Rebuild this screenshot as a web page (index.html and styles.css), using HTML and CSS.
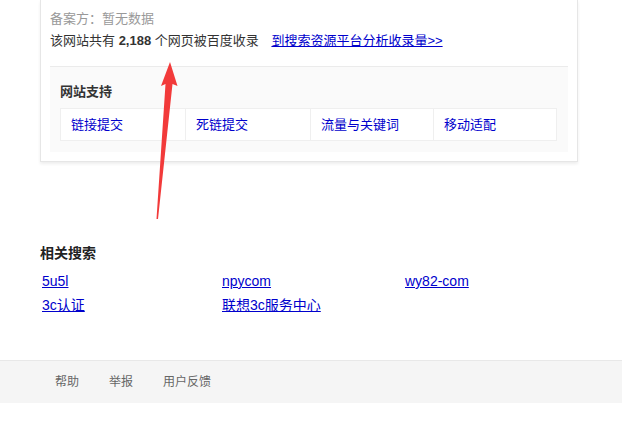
FILE: index.html
```html
<!DOCTYPE html>
<html lang="zh-CN">
  <head>
    <meta charset="UTF-8" />
    <meta name="viewport" content="width=device-width, initial-scale=1.0" />
    <title>网站收录</title>
    <link rel="stylesheet" href="styles.css">
  </head>
  <body>
    <div class="page">
      <!-- Site info card -->
      <div class="card">
        <p class="record">备案方：暂无数据</p>
        <p class="indexed">
          该网站共有 <b>2,188</b> 个网页被百度收录
          <a href="#" class="analyse">到搜索资源平台分析收录量&gt;&gt;</a>
        </p>

        <div class="support">
          <h3>网站支持</h3>
          <div class="support-grid">
            <a href="#">链接提交</a>
            <a href="#">死链提交</a>
            <a href="#">流量与关键词</a>
            <a href="#">移动适配</a>
          </div>
        </div>
      </div>

      <!-- Related searches -->
      <div class="related">
        <h3>相关搜索</h3>
        <div class="related-grid">
          <a href="#">5u5l</a>
          <a href="#">npycom</a>
          <a href="#">wy82-com</a>
          <a href="#">3c认证</a>
          <a href="#">联想3c服务中心</a>
        </div>
      </div>

      <!-- Footer -->
      <footer>
        <a href="#">帮助</a>
        <a href="#">举报</a>
        <a href="#">用户反馈</a>
      </footer>

      <!-- Annotation arrow -->
      <svg class="arrow" width="622" height="425" viewBox="0 0 622 425">
        <polygon points="170,62 177.5,86 172.5,84 158,219 156.5,219 165.5,84 161,86" fill="#f23a3a"/>
      </svg>
    </div>
  </body>
</html>
```

FILE: styles.css
```css
/* Base */
* {
  margin: 0;
  padding: 0;
  box-sizing: border-box;
}

body {
  font-family: "Liberation Sans", "Noto Sans CJK SC", sans-serif;
  font-size: 13px;
  color: #333;
  background: #fff;
}

a {
  color: #0000cc;
}

.page {
  position: relative;
  width: 622px;
  height: 425px;
  overflow: hidden;
}

/* Card */
.card {
  width: 538px;
  margin-left: 40px;
  padding: 8px 9px 9px 9px;
  border: 1px solid #e6e6e6;
  border-top: none;
  box-shadow: 0 2px 3px rgba(0, 0, 0, 0.07);
}

.record {
  line-height: 22px;
  color: #999;
}

.indexed {
  line-height: 21px;
  color: #333;
}

.indexed b {
  font-weight: bold;
}

.analyse {
  margin-left: 9px;
}

.support {
  margin-top: 15px;
  background: #fafafa;
  border-top: 1px solid #ebebeb;
  padding: 15px 11px 11px 10px;
}

.support h3 {
  font-size: 13px;
  line-height: 20px;
  font-weight: bold;
  color: #333;
  margin-bottom: 6px;
}

.support-grid {
  display: grid;
  grid-template-columns: 124px 125px 123px 124px;
  width: 497px;
  background: #fff;
  border: 1px solid #efefef;
}

.support-grid a {
  line-height: 31px;
  padding-left: 10px;
  text-decoration: none;
  border-left: 1px solid #efefef;
}

.support-grid a:first-child {
  border-left: none;
}

/* Related searches */
.related {
  margin-top: 81px;
  margin-left: 40px;
}

.related h3 {
  font-size: 14px;
  line-height: 20px;
  font-weight: bold;
  color: #222;
  margin-bottom: 6px;
}

.related-grid {
  display: grid;
  grid-template-columns: 180px 183px 1fr;
  padding-left: 2px;
}

.related-grid a {
  font-size: 14px;
  line-height: 24px;
}

/* Footer */
footer {
  position: absolute;
  left: 0;
  top: 360px;
  width: 622px;
  height: 43px;
  background: #f5f5f5;
  border-top: 1px solid #e8e8e8;
  display: flex;
  gap: 30px;
  padding: 0 0 3px 55px;
  align-items: center;
}

footer a {
  font-size: 12px;
  color: #666;
  text-decoration: none;
}

/* Annotation */
.arrow {
  position: absolute;
  left: 0;
  top: 0;
  pointer-events: none;
}
```
